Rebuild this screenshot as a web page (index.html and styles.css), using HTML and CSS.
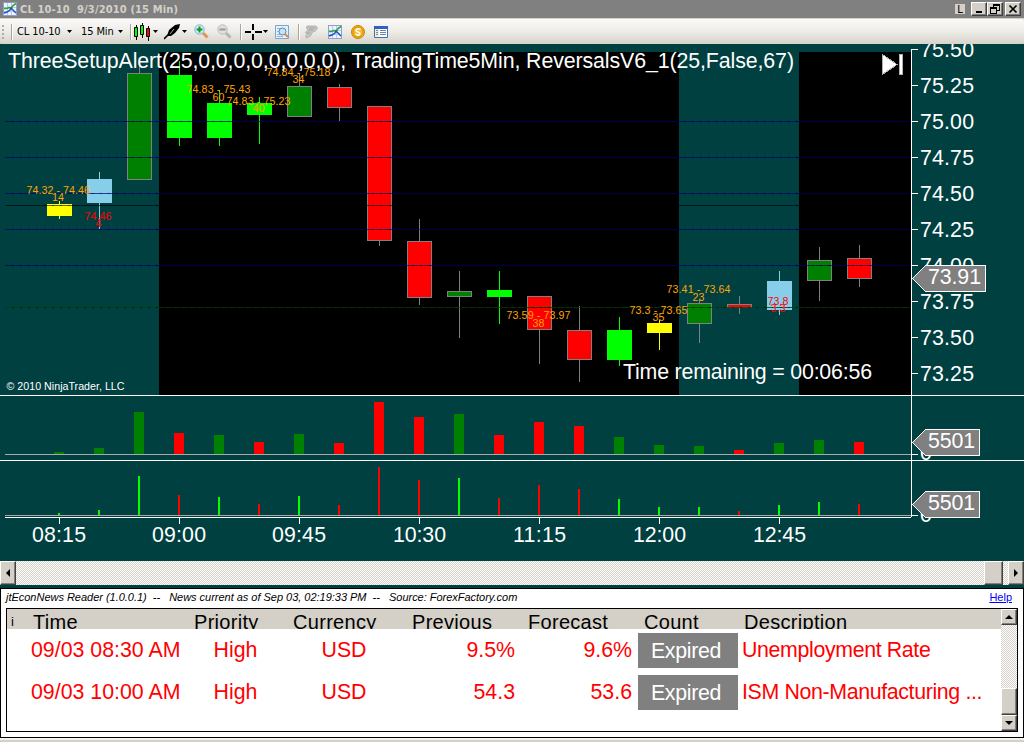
FILE: index.html
```
<!DOCTYPE html>
<html lang="en">
<head>
    <meta charset="UTF-8">
    <title>CL 10-10 9/3/2010 (15 Min)</title>
    <link rel="stylesheet" href="styles.css">
</head>
<body>
    <svg width="0" height="0" class="defs">
        <symbol id="icon-chart" viewBox="0 0 14 14">
            <rect x=".5" y=".5" width="13" height="13" fill="#eef3ff" stroke="#8fa0cc"/>
            <path d="M4.5 1v12M8.5 1v12M1 5.5h12M1 9.5h12" stroke="#b9c8ee"/>
            <path d="M1 6.500h3l2-1 2 1 2-3 3-2" fill="none" stroke="#2fa52f" stroke-width="1.6"/>
            <path d="M1 11l3-1 3-2 1-2 2 2 3 3" fill="none" stroke="#1c55c0" stroke-width="1.5"/>
        </symbol>
    </svg>

    <header class="titlebar">
        <svg class="app-icon" width="14" height="14"><use href="#icon-chart"/></svg>
        <h1>CL 10-10&nbsp; 9/3/2010 (15 Min)</h1>
        <div class="win-buttons">
            <span class="link-btn">L</span>
            <button class="win-btn"><svg width="11" height="10"><path d="M2 7h6v2H2z"/></svg></button>
            <button class="win-btn"><svg width="11" height="10"><path d="M3 0h7v7H7v3H0V3h3zM4 2v1h3v3h2V2zM1 5v4h5V5z" fill-rule="evenodd"/></svg></button>
            <button class="win-btn close"><svg width="11" height="10"><path d="M1.5 1.5l7 7M8.500 1.500l-7 7" stroke="#000" stroke-width="1.7"/></svg></button>
        </div>
    </header>

    <nav class="toolbar">
        <span class="grip"></span>
        <span class="sep"></span>
        <span class="pick instrument">CL 10-10</span><i class="caret"></i>
        <span class="pick interval">15 Min</span><i class="caret"></i>
        <span class="sep"></span>
        <svg class="tool candles" width="17" height="18">
            <path d="M2.500 2v15M8.500 0v15M14.500 3v15" stroke="#000"/>
            <path d="M.5 4.500h3v9h-3z" fill="#0f0" stroke="#000"/>
            <path d="M6.500 2.500h3v9h-3z" fill="#0f0" stroke="#000"/>
            <path d="M12.500 5.500h3v8h-3z" fill="#f00" stroke="#000"/>
        </svg><i class="caret"></i>
        <svg class="tool pen" width="17" height="16">
            <path d="M16 0l-5 1-6 5-2 6 4 0 4-3 4-5z" fill="#000"/>
            <path d="M0 15l5-5" stroke="#000" stroke-width="1.6"/>
            <path d="M6 10l4-5" stroke="#aaa"/>
        </svg><i class="caret"></i>
        <svg class="tool zoom-in" width="15" height="15">
            <path d="M9 9l4.500 4.500" stroke="#e0974a" stroke-width="3"/>
            <circle cx="5.500" cy="5.500" r="4.700" fill="#d7ecf8" stroke="#79b2d6"/>
            <path d="M5.500 2.500v6M2.500 5.500h6" stroke="#0a9a1e" stroke-width="2"/>
        </svg>
        <svg class="tool zoom-out" width="15" height="15">
            <path d="M9 9l4.500 4.500" stroke="#b5b5b5" stroke-width="3"/>
            <circle cx="5.500" cy="5.500" r="4.700" fill="#dedede" stroke="#bbb"/>
            <path d="M2.500 5.500h6" stroke="#999" stroke-width="2"/>
        </svg>
        <span class="sep after-zoom"></span>
        <svg class="tool cross" width="17" height="16">
            <path d="M8 0v6M8 10v6M0 8h6M10 8h7" stroke="#000" stroke-width="2"/>
        </svg><i class="caret"></i>
        <svg class="tool find" width="14" height="14">
            <path d="M.5.500h13v13H.500z" fill="#e3f0fb" stroke="#80a3cf"/>
            <path d="M2 3.500h3M2 6.500h2M2 9.500h3M2 11.500h6" stroke="#9db3d0"/>
            <circle cx="7.500" cy="6.500" r="3.500" fill="#c3e4f7" stroke="#5189c4"/>
            <path d="M10 9l3 3" stroke="#d98b3f" stroke-width="2"/>
        </svg>
        <span class="sep after-find"></span>
        <svg class="tool script" width="14" height="14">
            <path d="M3 1h9l1.500 2-2 3-3 1-2 4-4 2-1-2 2-2-2-1 1-2h2l-2-3z" fill="#c4c4c4" stroke="#b4b4b4"/>
            <path d="M5 3h6M5 5h4M3 8h3" stroke="#a4a4a4"/>
        </svg>
        <svg class="tool" width="14" height="14"><use href="#icon-chart"/></svg>
        <svg class="tool coin" width="14" height="14">
            <circle cx="7" cy="7" r="6.500" fill="#f0ac12" stroke="#c98607"/>
            <circle cx="7" cy="7" r="4.800" fill="#f6bd30" stroke="#e09c10"/>
            <path d="M9.500 4.500Q7 3 5.500 4.500T7 7t1.500 2.500-4-.3" fill="none" stroke="#fff" stroke-width="1.500"/>
        </svg>
        <svg class="tool table" width="14" height="14">
            <path d="M.5 1.500h13v11H.500z" fill="#fff" stroke="#3d6fc4"/>
            <path d="M0 1h14v3H0z" fill="#2c62c6"/>
            <path d="M1 4h4v8H1z" fill="#fff0b5"/>
            <path d="M2 5.500h2M2 7.500h2M2 9.500h2M6 5.500h6M6 7.500h6M6 9.500h6" stroke="#6b86a8"/>
        </svg>
    </nav>

    <main class="chart">
        <svg id="chart" width="1024" height="517" viewBox="0 44 1024 517">
            <g class="session">
                <rect x="159" y="52" width="520" height="343"/>
                <rect x="799" y="52" width="112" height="343"/>
            </g>
            <g id="candles"></g>
            <g id="grid"></g>
            <g id="volume"></g>

            <g class="axis">
                <path d="M911.500 49V517M0 395.500H1024M0 460.500H1024M5 517.500H911"/>
                <path id="ticks" d=""/>
                <path class="zero" d="M5 454.500H911M5 515.500H911"/>
                <path d="M912 454.500H918M912 515.500H918"/>
            </g>

            <g class="label">
                <text x="920" y="57" textLength="54">75.50</text>
                <text x="920" y="93" textLength="54">75.25</text>
                <text x="920" y="129" textLength="54">75.00</text>
                <text x="920" y="165" textLength="54">74.75</text>
                <text x="920" y="201" textLength="54">74.50</text>
                <text x="920" y="237" textLength="54">74.25</text>
                <text x="920" y="273" textLength="54">74.00</text>
                <text x="920" y="309" textLength="54">73.75</text>
                <text x="920" y="345" textLength="54">73.50</text>
                <text x="920" y="381" textLength="54">73.25</text>
                <text x="920" y="460">0</text>
                <text x="920" y="522">0</text>
                <text x="32" y="542" textLength="54">08:15</text>
                <text x="152" y="542" textLength="54">09:00</text>
                <text x="272" y="542" textLength="54">09:45</text>
                <text x="393" y="542" textLength="53">10:30</text>
                <text x="513" y="542" textLength="53">11:15</text>
                <text x="633" y="542" textLength="53">12:00</text>
                <text x="753" y="542" textLength="53">12:45</text>
            </g>

            <g class="note">
                <text x="26.500" y="194" textLength="63.500">74.32 - 74.46</text>
                <text x="52" y="201">14</text>
                <text x="186.500" y="93" textLength="64">74.83 - 75.43</text>
                <text x="212.500" y="101">60</text>
                <text x="226.500" y="105" textLength="64">74.83 - 75.23</text>
                <text x="252.500" y="112">40</text>
                <text x="266.500" y="76" textLength="64">74.84 - 75.18</text>
                <text x="292.500" y="83">34</text>
                <text x="506.500" y="319" textLength="64">73.59 - 73.97</text>
                <text x="532.500" y="327">38</text>
                <text x="629.500" y="314" textLength="58">73.3 - 73.65</text>
                <text x="652.500" y="321">35</text>
                <text x="666.500" y="293" textLength="64">73.41 - 73.64</text>
                <text x="692.500" y="301">23</text>
            </g>
            <g class="note low">
                <text x="84.500" y="220" textLength="27">74.46</text>
                <text x="95.500" y="227">4</text>
                <text x="767.500" y="305" textLength="21">73.8</text>
                <text x="770.500" y="312">3.3</text>
            </g>

            <g class="tag">
                <path d="M912.500 278.500L925.500 265.500H985.500V291.500H925.500z"/>
                <path d="M912.500 442.500L925.500 429.500H979.500V455.500H925.500z"/>
                <path d="M912.500 504.500L925.500 491.500H979.500V517.500H925.500z"/>
            </g>
            <g class="label">
                <text x="928" y="284" textLength="53">73.91</text>
                <text x="928" y="448" textLength="47">5501</text>
                <text x="928" y="510" textLength="47">5501</text>
                <text x="8" y="68" textLength="786">ThreeSetupAlert(25,0,0,0,0,0,0,0,0), TradingTime5Min, ReversalsV6_1(25,False,67)</text>
                <text x="623" y="379" textLength="249">Time remaining = 00:06:56</text>
            </g>
            <text class="copyright" x="6.500" y="390" textLength="118">© 2010 NinjaTrader, LLC</text>
            <path class="to-end" d="M882.500 54.500L897 64.500L882.500 74.500zM899.500 54.500h3v20h-3z"/>
        </svg>
    </main>

    <div class="hscroll">
        <button class="scroll-btn"><i class="arrow left"></i></button>
        <span class="track"></span>
        <span class="thumb"></span>
        <span class="gap"></span>
        <button class="scroll-btn"><i class="arrow right"></i></button>
    </div>

    <section class="news">
        <div class="news-head">
            <em>jtEconNews Reader (1.0.0.1)&nbsp; --&nbsp;&nbsp; News current as of Sep 03, 02:19:33 PM&nbsp; --&nbsp;&nbsp; Source: ForexFactory.com</em>
            <a href="#">Help</a>
        </div>
        <div class="news-box">
            <div class="news-grid">
                <div class="row head">
                    <span class="info">i</span>
                    <span class="time">Time</span>
                    <span class="priority">Priority</span>
                    <span class="currency">Currency</span>
                    <span class="previous">Previous</span>
                    <span class="forecast">Forecast</span>
                    <span class="count">Count</span>
                    <span class="desc">Description</span>
                </div>
                <div class="row">
                    <span></span>
                    <span>09/03 08:30 AM</span>
                    <span class="mid">High</span>
                    <span class="mid">USD</span>
                    <span class="num">9.5%</span>
                    <span class="num forecast">9.6%</span>
                    <span class="expired">Expired</span>
                    <span class="desc">Unemployment Rate</span>
                </div>
                <div class="row">
                    <span></span>
                    <span>09/03 10:00 AM</span>
                    <span class="mid">High</span>
                    <span class="mid">USD</span>
                    <span class="num">54.3</span>
                    <span class="num forecast">53.6</span>
                    <span class="expired">Expired</span>
                    <span class="desc">ISM Non-Manufacturing ...</span>
                </div>
            </div>
            <div class="vscroll">
                <button class="scroll-btn"><i class="arrow up"></i></button>
                <span class="track"></span>
                <span class="thumb"></span>
                <button class="scroll-btn"><i class="arrow down"></i></button>
            </div>
        </div>
    </section>

    <script src="chart.js"></script>
</body>
</html>
```
FILE: styles.css
```
body {
    margin: 0;
    width: 1024px;
    height: 742px;
    overflow: hidden;
    display: flex;
    flex-direction: column;
    background: #d4d0c8;
    font-family: "Liberation Sans", Arial, sans-serif;
}
.defs {
    position: absolute;
}
button {
    box-sizing: border-box;
    padding: 0;
    border: 1px solid;
    border-color: #fff #404040 #404040 #fff;
    background: #d4d0c8;
    box-shadow: inset -1px -1px 0 #808080;
    display: flex;
    align-items: center;
    justify-content: center;
}

/* title bar */
.titlebar {
    height: 18px;
    flex: none;
    display: flex;
    align-items: center;
    background: #808080;
    padding: 0 3px;
}
.titlebar h1 {
    margin: 0 auto 0 3px;
    font: bold 11px "DejaVu Sans Condensed", "DejaVu Sans", sans-serif;
    letter-spacing: 0.15px;
    color: #d4d0c8;
    white-space: nowrap;
}
.win-buttons {
    display: flex;
    align-items: center;
}
.link-btn {
    width: 10px;
    height: 10px;
    margin-right: 6px;
    background: #d4d0c8;
    font: 11px/11px "DejaVu Sans Condensed", sans-serif;
    text-align: center;
}
.win-btn {
    width: 16px;
    height: 14px;
}
.win-btn.close {
    margin-left: 2px;
}

/* toolbar */
.toolbar {
    height: 25px;
    flex: none;
    margin-top: 1px;
    display: flex;
    align-items: center;
    box-sizing: border-box;
    padding-left: 2px;
    border-radius: 0 2px 3px 3px;
    background: linear-gradient(#fbfaf9, #eeece8 50%, #d6d3ca);
    box-shadow: 0 3px 0 -1px #004040;
    font: 11px "DejaVu Sans Condensed", "DejaVu Sans", sans-serif;
}
.toolbar svg {
    flex: none;
}
.grip {
    width: 2px;
    height: 14px;
    margin-right: 7px;
    background: repeating-linear-gradient(#b0ada4 0 2px, transparent 2px 4px);
}
.sep {
    width: 1px;
    height: 16px;
    background: #a6a49c;
    box-shadow: 1px 0 0 #fff;
}
.pick {
    white-space: nowrap;
    letter-spacing: -0.1px;
}
.instrument {
    width: 50px;
    margin-left: 5px;
}
.interval {
    width: 37px;
    margin-left: 9px;
}
.caret {
    width: 5px;
    height: 3px;
    background: #000;
    clip-path: polygon(0 0, 100% 0, 50% 100%);
}
.caret + .sep {
    margin-left: 7px;
}
.candles {
    margin: 0 2px 0 3px;
}
.pen {
    margin: 0 1px 0 6px;
}
.zoom-in {
    margin-left: 7px;
}
.zoom-out {
    margin-left: 8px;
}
.after-zoom {
    margin-left: 8px;
}
.cross {
    margin: 0 1px 0 4px;
}
.find {
    margin-left: 7px;
}
.after-find {
    margin-left: 9px;
}
.script {
    margin: 0 10px 0 5px;
}
.coin, .table {
    margin-left: 9px;
}

/* price chart */
.chart {
    height: 517px;
    flex: none;
    background: #004040;
}
.chart svg {
    display: block;
    shape-rendering: crispEdges;
}
.axis path {
    stroke: #fff;
    fill: none;
}
.axis .zero {
    stroke: #a9a9a9;
}
.label text {
    font-size: 21.33px;
    fill: #fff;
}
.note text {
    font-size: 10.67px;
    fill: orange;
}
.note.low text {
    fill: #f00;
}
.copyright {
    font-size: 10.67px;
    fill: #fff;
}
.tag path {
    fill: #808080;
    stroke: #fff;
}
.to-end {
    fill: #fff;
    stroke: #b0b0b0;
}

/* scrollbars */
.hscroll {
    height: 24px;
    flex: none;
    display: flex;
    border-bottom: 3px solid #004040;
}
.track, .gap {
    background: repeating-conic-gradient(#fff 0 25%, #d4d0c8 0 50%) 0 0 / 2px 2px;
}
.track {
    flex: 1;
}
.gap {
    width: 5px;
}
.thumb {
    box-sizing: border-box;
    border: 1px solid;
    border-color: #fff #404040 #404040 #fff;
    background: #d4d0c8;
    box-shadow: inset -1px -1px 0 #808080;
}
.hscroll .thumb {
    width: 19px;
}
.hscroll .scroll-btn {
    width: 16px;
}
.arrow {
    border: 4px solid transparent;
}
.arrow.left {
    border-left: 0;
    border-right-color: #000;
}
.arrow.right {
    border-right: 0;
    border-left-color: #000;
}
.arrow.up {
    border-top: 0;
    border-bottom-color: #000;
}
.arrow.down {
    border-bottom: 0;
    border-top-color: #000;
}

/* news reader */
.news {
    height: 150px;
    flex: none;
    box-sizing: border-box;
    border: 1px solid #000;
    background: #fff;
    padding: 0 5px;
    box-shadow: 0 2px 0 #f4f3f0;
}
.news-head {
    height: 19px;
    display: flex;
    justify-content: space-between;
    align-items: center;
    padding-right: 6px;
    font-size: 11px;
    line-height: 17px;
    align-items: flex-start;
}
.news-head em {
    white-space: nowrap;
    letter-spacing: -0.02px;
}
.news-head a {
    color: #00f;
}
.news-box {
    height: 122px;
    border: 1px solid #000;
    display: flex;
}
.news-grid {
    flex: 1;
    font-size: 21.33px;
    overflow: hidden;
}
.row {
    display: grid;
    grid-template-columns: 24px 156px 97px 120px 114px 120px 100px 1fr;
    height: 35px;
    margin-bottom: 7px;
    line-height: 35px;
    color: #f00;
    white-space: nowrap;
}
.row.head {
    height: 20px;
    margin-bottom: 4px;
    overflow: hidden;
    background: #d4d0c8;
    color: #000;
    font-size: 20px;
    line-height: 26px;
    letter-spacing: 0.3px;
}
.head .info {
    font-size: 13px;
    padding-left: 4px;
}
.head .time {
    padding-left: 2px;
}
.head .priority {
    padding-left: 7px;
}
.head .currency {
    padding-left: 9px;
}
.head .previous {
    padding-left: 8px;
}
.head .forecast {
    padding-left: 10px;
}
.head .count {
    padding-left: 6px;
}
.head .desc {
    padding-left: 6px;
    letter-spacing: 0.3px;
}
.mid {
    text-align: center;
}
.num {
    text-align: right;
    padding-right: 3px;
}
.num.forecast {
    padding-right: 6px;
}
.expired {
    background: #808080;
    color: #fff;
    text-align: center;
    padding: 1px 4px 0 0;
    height: 34px;
    line-height: 35px;
    letter-spacing: -0.3px;
}
.desc {
    padding-left: 4px;
    letter-spacing: -0.35px;
}
.vscroll {
    width: 16px;
    display: flex;
    flex-direction: column;
}
.vscroll .scroll-btn {
    height: 16px;
}
.vscroll .thumb {
    height: 27px;
}
```
FILE: chart.js
```
const NS = 'http://www.w3.org/2000/svg';

// [color, high, top, bottom, low], bars are 40px apart starting at x = 59
const candles = [
    ['yellow', 201, 204, 216, 219],
    ['skyblue', 172, 179, 203, 229],
    ['green', 58, 73, 180, 180],
    ['lime', 61, 75, 138, 146],
    ['lime', 90, 103, 138, 146],
    ['lime', 97, 103, 115, 144],
    ['green', 73, 86, 117, 117],
    ['red', 84, 87, 108, 121],
    ['red', 106, 106, 241, 246],
    ['red', 219, 241, 298, 305],
    ['green', 271, 291, 297, 338],
    ['lime', 271, 290, 297, 324],
    ['red', 296, 296, 330, 364],
    ['red', 306, 330, 360, 382],
    ['lime', 317, 330, 360, 366],
    ['yellow', 320, 323, 333, 350],
    ['green', 300, 303, 324, 343],
    ['red', 296, 304, 308, 314],
    ['skyblue', 271, 281, 310, 315],
    ['green', 247, 260, 281, 301],
    ['red', 245, 258, 279, 287]
];

// tops of the wide and the thin volume bars
const volume = [
    ['g', 452, 513], ['g', 448, 510], ['g', 412, 476], ['r', 433, 495],
    ['g', 435, 497], ['r', 442, 504], ['g', 434, 496], ['r', 443, 505],
    ['r', 402, 467], ['r', 417, 480], ['g', 414, 478], ['r', 435, 498],
    ['r', 422, 485], ['r', 426, 489], ['g', 437, 499], ['g', 445, 507],
    ['g', 446, 507], ['r', 450, 511], ['g', 443, 505], ['g', 440, 502],
    ['r', 442, 504]
];

function rect(parent, x, y, w, h, fill) {
    const el = document.createElementNS(NS, 'rect');
    el.setAttribute('x', x);
    el.setAttribute('y', y);
    el.setAttribute('width', w);
    el.setAttribute('height', h);
    el.setAttribute('fill', fill);
    parent.appendChild(el);
    return el;
}

const candleLayer = document.getElementById('candles');
candles.forEach(([color, high, top, bottom, low], i) => {
    const x = 59 + i * 40;
    const outlined = color === 'green' || color === 'red';
    const edge = outlined ? '#808080' : color;
    rect(candleLayer, x, high, 1, low - high, edge);
    rect(candleLayer, x - 12, top, 25, bottom - top, edge);
    if (outlined) {
        rect(candleLayer, x - 11, top + 1, 23, bottom - top - 2, color);
    }
});

const volumeLayer = document.getElementById('volume');
volume.forEach(([side, wide, thin], i) => {
    const x = 59 + i * 40;
    rect(volumeLayer, x - 5, wide, 10, 454 - wide, side === 'g' ? 'green' : 'red');
    rect(volumeLayer, x - 1, thin, 2, 515 - thin, side === 'g' ? 'lime' : 'red');
});

// price levels
const gridLayer = document.getElementById('grid');
function gridLine(y, color, opacity) {
    rect(gridLayer, 5, y, 906, 1, color).setAttribute('opacity', opacity);
    for (let x = 12; x < 909; x += 8) {
        rect(gridLayer, x, y, 2, 1, '#000').setAttribute('opacity', 0.5);
    }
}
[121, 157, 193, 229, 265].forEach(y => gridLine(y, '#000080', 0.7));
gridLine(205, '#000', 0.6);
gridLine(307, '#004000', 0.8);

let ticks = '';
for (let y = 50; y < 380; y += 36) ticks += `M912 ${y - 0.5}H918`;
for (let x = 59; x < 800; x += 120) ticks += `M${x + 0.5} 518V524`;
document.getElementById('ticks').setAttribute('d', ticks);
```
